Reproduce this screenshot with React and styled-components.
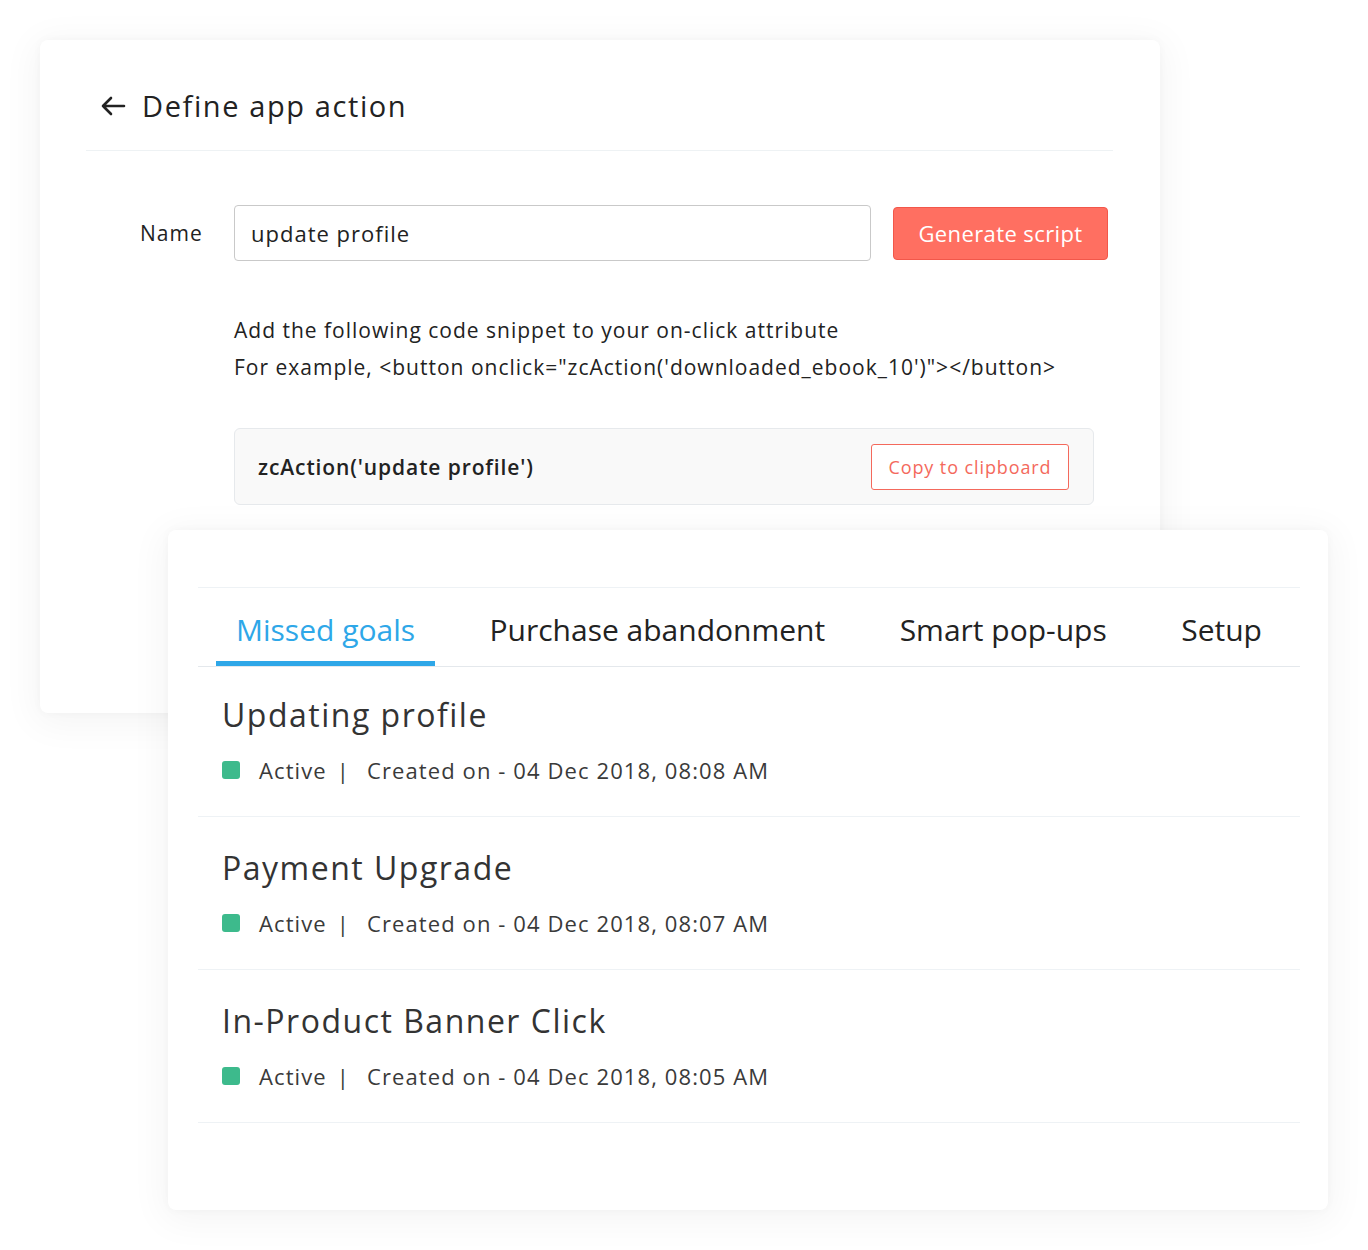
import React from "react";
import styled, { createGlobalStyle } from "styled-components";

const GlobalStyle = createGlobalStyle`
  body {
    margin: 0;
    background: #ffffff;
    font-family: "Open Sans", "Noto Sans", sans-serif;
    color: #222;
  }
`;

const Stage = styled.main`
  padding: 40px 0 40px 40px;
  width: 1328px;
`;

const Card = styled.section`
  background: #ffffff;
  border-radius: 8px;
  box-shadow: 0 6px 36px 6px rgba(0, 0, 0, 0.045), 0 0 10px rgba(0, 0, 0, 0.03);
`;

const ActionCard = styled(Card)`
  width: 1120px;
  height: 673px;
  box-sizing: border-box;
  padding: 0 47px 0 46px;
`;

const GoalsCard = styled(Card)`
  position: relative;
  z-index: 1;
  width: 1160px;
  height: 680px;
  box-sizing: border-box;
  margin: -183px 0 0 128px;
  padding: 57px 28px 0 30px;
`;

const Header = styled.header`
  display: flex;
  align-items: center;
  gap: 16px;
  padding: 46px 0 24px 14px;
  border-bottom: 1px solid #eef2f4;
`;

const Title = styled.h1`
  margin: 0;
  font-size: 29px;
  line-height: 40px;
  font-weight: 400;
  letter-spacing: 1.6px;
  color: #222;
`;

const NameRow = styled.div`
  display: flex;
  align-items: center;
  margin-top: 54px;
  padding-left: 54px;
`;

const Label = styled.label`
  width: 94px;
  font-size: 21px;
  letter-spacing: 1px;
  color: #222;
`;

const Input = styled.div`
  width: 637px;
  height: 56px;
  box-sizing: border-box;
  display: flex;
  align-items: center;
  padding: 0 16px;
  border: 1px solid #c9c9c9;
  border-radius: 4px;
  font-size: 22px;
  letter-spacing: 1px;
  color: #222;
`;

const PrimaryButton = styled.button`
  margin-left: 22px;
  width: 215px;
  height: 53px;
  border: 1px solid #f2574a;
  border-radius: 4px;
  background: #ff6f61;
  color: #ffffff;
  font-family: inherit;
  font-size: 22px;
  letter-spacing: 0.4px;
`;

const Help = styled.p`
  margin: 51px 0 0 148px;
  font-size: 21px;
  line-height: 37px;
  letter-spacing: 1px;
  color: #222;
`;

const CodeBox = styled.div`
  display: flex;
  align-items: center;
  justify-content: space-between;
  margin: 42px 0 0 148px;
  width: 860px;
  height: 77px;
  box-sizing: border-box;
  padding: 0 24px 0 23px;
  background: #f9f9f9;
  border: 1px solid #e6e9ec;
  border-radius: 6px;
`;

const Code = styled.span`
  font-size: 21px;
  font-weight: 600;
  letter-spacing: 0.9px;
  color: #222;
`;

const OutlineButton = styled.button`
  width: 198px;
  height: 46px;
  border: 1px solid #f4695c;
  border-radius: 3px;
  background: #ffffff;
  color: #f4695c;
  font-family: inherit;
  font-size: 18px;
  letter-spacing: 0.9px;
`;

const Tabs = styled.nav`
  display: flex;
  justify-content: space-between;
  padding: 0 18px;
  border-top: 1px solid #eef2f5;
  border-bottom: 1px solid #e4e8ec;
`;

const Tab = styled.div`
  padding: 22px 20px 11px;
  font-size: 30px;
  line-height: 40px;
  color: ${(p) => (p.$active ? "#2ea7e8" : "#222")};
  border-bottom: 5px solid ${(p) => (p.$active ? "#2ea7e8" : "transparent")};
`;

const Goal = styled.article`
  padding: 29px 24px 31px;
  border-bottom: 1px solid #eef2f5;

  &:first-of-type {
    padding-top: 26px;
  }
`;

const GoalTitle = styled.h2`
  margin: 0;
  font-size: 32px;
  line-height: 44px;
  font-weight: 400;
  letter-spacing: 1.5px;
  color: #333;
`;

const Status = styled.div`
  display: flex;
  align-items: center;
  margin-top: 18px;
  height: 30px;
  font-size: 22px;
  letter-spacing: 1.1px;
  color: #3a3a3a;
`;

const Dot = styled.span`
  width: 18px;
  height: 18px;
  border-radius: 3px;
  background: #3dba8c;
  margin-right: 19px;
`;

const Separator = styled.span`
  margin: 0 17px 0 10px;
`;

const goals = [
  { title: "Updating profile", created: "04 Dec 2018, 08:08 AM" },
  { title: "Payment Upgrade", created: "04 Dec 2018, 08:07 AM" },
  { title: "In-Product Banner Click", created: "04 Dec 2018, 08:05 AM" },
];

function BackArrow() {
  return (
    <svg width="26" height="22" viewBox="0 0 26 22" fill="none">
      <path
        d="M24 11H3M11 3L3 11L11 19"
        stroke="#222"
        strokeWidth="2.6"
        strokeLinecap="round"
        strokeLinejoin="round"
      />
    </svg>
  );
}

export default function App() {
  return (
    <Stage>
      <GlobalStyle />
      <ActionCard>
        <Header>
          <BackArrow />
          <Title>Define app action</Title>
        </Header>
        <NameRow>
          <Label>Name</Label>
          <Input>update profile</Input>
          <PrimaryButton>Generate script</PrimaryButton>
        </NameRow>
        <Help>
          Add the following code snippet to your on-click attribute
          <br />
          For example, &lt;button onclick="zcAction('downloaded_ebook_10')"&gt;&lt;/button&gt;
        </Help>
        <CodeBox>
          <Code>zcAction('update profile')</Code>
          <OutlineButton>Copy to clipboard</OutlineButton>
        </CodeBox>
      </ActionCard>

      <GoalsCard>
        <Tabs>
          <Tab $active>Missed goals</Tab>
          <Tab>Purchase abandonment</Tab>
          <Tab>Smart pop-ups</Tab>
          <Tab>Setup</Tab>
        </Tabs>
        {goals.map((goal) => (
          <Goal key={goal.title}>
            <GoalTitle>{goal.title}</GoalTitle>
            <Status>
              <Dot />
              Active
              <Separator>|</Separator>
              Created on - {goal.created}
            </Status>
          </Goal>
        ))}
      </GoalsCard>
    </Stage>
  );
}
